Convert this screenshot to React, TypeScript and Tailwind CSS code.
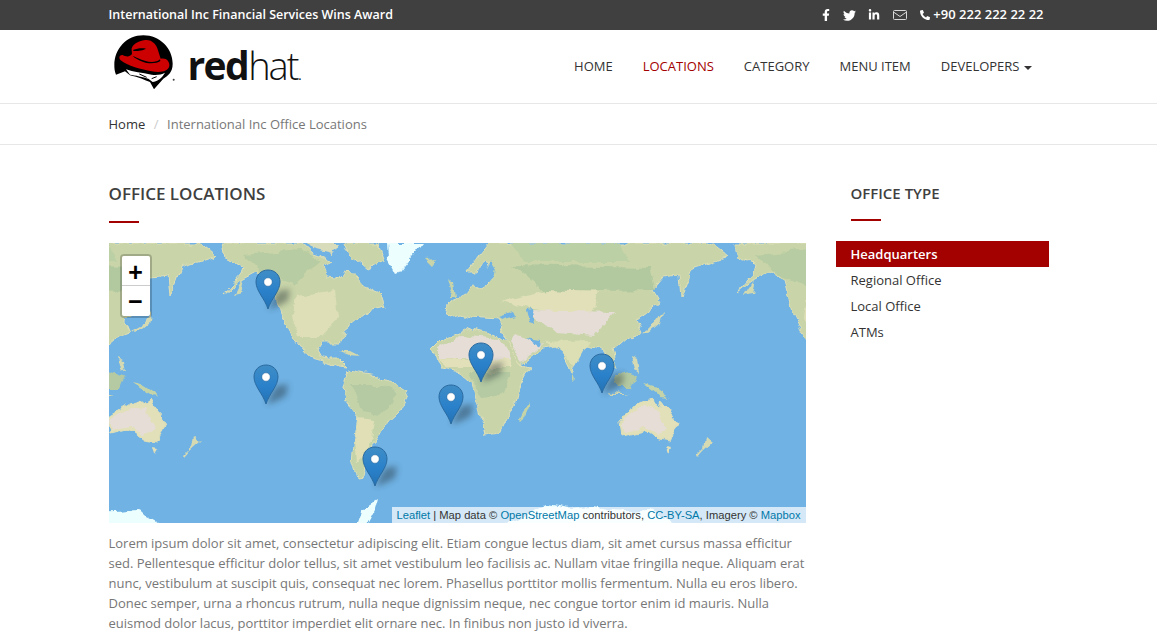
import React from 'react'
import { FaFacebookF, FaTwitter, FaLinkedinIn, FaPhoneAlt } from 'react-icons/fa'

const navItems = ['HOME', 'LOCATIONS', 'CATEGORY', 'MENU ITEM']
const officeTypes = ['Regional Office', 'Local Office', 'ATMs']
const pins = [
    [268, 309],
    [266, 404],
    [481, 382],
    [602, 393],
    [451, 424],
    [375, 486],
]

const LogoHat = () => (
    <svg viewBox="0 0 210 180" className="w-[70px] h-[60px] shrink-0">
        <path d="M13 100C13 50 50 10 100 10C150 10 188 50 188 95C188 120 175 130 160 140L132 172L120 150C105 145 85 135 60 130L45 118L18 128C14 118 13 110 13 100Z" fill="#000" />
        <path d="M48 112C70 120 95 122 125 128C140 130 155 128 165 122C155 140 140 148 128 150L115 140C100 135 75 130 60 128Z" fill="#fff" />
        <path d="M88 126L110 136M125 140L140 134" stroke="#000" strokeWidth="3" />
        <path d="M65 55C62 40 85 26 105 24C127 22 140 38 144 55L152 80C168 76 180 88 178 102C174 120 150 122 125 118C95 112 52 102 32 85C25 78 28 68 38 69C50 76 60 74 66 66Z" fill="#cc0000" />
        <path d="M70 53C80 50 95 47 108 50C100 55 80 58 70 57Z" fill="#000" />
        <path d="M68 72C85 78 98 88 125 90C135 90 145 88 150 82L151 87C140 95 115 96 98 89C85 84 75 79 68 72Z" fill="#000" />
        <circle cx="191" cy="143" r="3" fill="#444" />
    </svg>
)

const MailIcon = () => (
    <svg viewBox="0 0 14 10" className="w-[14px] h-[10px] mr-[13px]" fill="none" stroke="#d8d8d8" strokeWidth="1">
        <rect x="0.5" y="0.5" width="13" height="9" rx="1" />
        <path d="M0.5 2L7 6.5L13.5 2" />
    </svg>
)

const Continents = () => (
    <g id="world">
        {/* north america */}
        <path d="M222 243L225 258L236 262L243 265L241 274L226 292L240 281L257 272L273 280L277 295L282 315L290 332L300 345L310 357L327 362L340 367L348 368L338 358L330 358L322 357L318 350L323 342L340 342L345 338L342 332L357 320L367 312L385 308L380 292L363 285L348 268L337 278L327 277L323 267L333 262L313 255L300 243Z" fill="#c9d5a9" stroke="#dfdfb5" />
        <path d="M345 243L378 243L385 262L368 270L350 255Z" fill="#c9d5a9" stroke="#dfdfb5" />
        <path d="M305 243L340 243L332 255L312 250Z" fill="#d8dcba" />
        <path d="M295 296L335 290L338 318L322 336L300 336L292 316Z" fill="#dedfb7" />
        <path d="M243 255L300 250L320 262L295 285L265 275Z" fill="#b7cca2" />
        <path d="M387 243L422 243L397 275L388 258Z" fill="#ecfffe" />
        <path d="M425 258L438 257L432 265Z" fill="#c9d5a9" />
        <path d="M338 350L350 350L360 355L348 354Z" fill="#d2d9ae" />
        <path d="M232 296L243 279L240 294Z" fill="#d2d9ae" />

        {/* south america */}
        <path d="M343 388L348 370L377 375L390 382L408 393L398 413L383 427L375 442L367 448L363 477L357 478L352 463L355 437L358 417L345 400Z" fill="#c4d4a8" stroke="#dfdfb5" />
        <path d="M352 385L385 385L397 397L380 415L362 412Z" fill="#b5caa3" />
        <path d="M358 418L375 420L372 440L357 462L355 440Z" fill="#e0dfb6" />

        {/* africa */}
        <path d="M433 348L443 338L460 333L463 327L500 337L507 342L520 365L530 367L517 392L515 403L500 433L485 435L480 413L472 383L460 372L440 368Z" fill="#c9d5a9" stroke="#dfdfb5" />
        <path d="M438 348L462 335L500 339L512 362L470 358L438 358Z" fill="#e5ddd6" />
        <path d="M437 358L510 360L512 368L445 368Z" fill="#e2e0b9" />
        <path d="M470 372L512 372L505 395L482 398Z" fill="#b5caa3" />
        <path d="M528 402L530 405L523 421L520 418Z" fill="#c4d4a8" />

        {/* eurasia */}
        <path d="M467 272L480 255L490 243L710 243L727 257L710 263L693 268L682 297L680 276L663 278L653 290L660 302L647 313L637 320L642 332L627 338L613 350L618 368L610 362L600 350L583 345L572 373L562 352L553 345L543 347L520 365L507 342L500 325L498 320L470 318L460 315L450 318L447 315L449 305L457 298L467 293L473 285L483 290L493 278L486 262L472 272Z" fill="#c9d5a9" stroke="#dfdfb5" />
        <path d="M513 265L650 268L655 290L600 291L545 292Z" fill="#b2c9a0" />
        <path d="M510 243L620 243L630 262L525 262Z" fill="#bcd0a6" />
        <path d="M500 302L545 290L600 292L590 318L540 310Z" fill="#e2e0b9" />
        <path d="M528 310L615 312L595 335L555 332Z" fill="#e5ddd6" />
        <path d="M515 335L543 343L522 362L510 342Z" fill="#e5ddd6" />
        <path d="M545 342L590 340L576 365L568 360Z" fill="#dcdeb3" />
        <path d="M498 317L513 312L515 316L500 320Z" fill="#70b2e4" />
        <path d="M527 310L534 309L536 324L530 322Z" fill="#70b2e4" />
        <path d="M528 338L541 340L540 345Z" fill="#70b2e4" />
        <path d="M489 262L494 270L492 280L488 272Z" fill="#70b2e4" />

        {/* islands */}
        <path d="M448 278L453 283L455 298L447 298L451 289Z" fill="#c9d5a9" />
        <path d="M643 333L652 328L660 315L663 312L660 324L648 334Z" fill="#d6dab2" />
        <path d="M630 357L636 360L638 372L633 368Z" fill="#d6dab2" />
        <path d="M615 378L626 372L635 375L630 388L618 388Z" fill="#b5caa3" />
        <path d="M608 392L627 395L612 395Z" fill="#d6dab2" />
        <path d="M643 383L655 386L670 397L660 396Z" fill="#c4d4a8" />
        <path d="M572 372L575 378L572 381Z" fill="#c4d4a8" />

        {/* australia */}
        <path d="M620 417L642 403L652 400L660 407L662 400L677 423L670 442L657 440L643 430L623 435Z" fill="#e2e0b9" stroke="#dfdfb5" />
        <path d="M622 418L642 408L657 410L668 430L656 436L643 427L624 431Z" fill="#e5ddd6" />
        <path d="M666 447L671 448L668 453Z" fill="#e2e0b9" />
        <path d="M705 436L712 442L703 450L696 458L695 456L703 448Z" fill="#d6dab2" />

        {/* antarctica */}
        <path d="M95 530L95 512L137 510L150 516L175 530Z" fill="#ecfffe" />
        <path d="M355 530L362 510L378 500L375 511L365 530Z" fill="#ecfffe" />
        <path d="M497 530L530 513L545 505L570 509L593 507L623 513L640 510L687 530Z" fill="#ecfffe" />
    </g>
)

const WorldMap = () => (
    <svg viewBox="109 243 697 280" className="absolute inset-0 w-full h-full">
        <defs>
            <linearGradient id="pin" x1="0" y1="0" x2="0" y2="1">
                <stop offset="0" stopColor="#3f8dc6" />
                <stop offset="0.55" stopColor="#2a81ca" />
                <stop offset="1" stopColor="#2472b4" />
            </linearGradient>
            <filter id="soft" x="-80%" y="-80%" width="260%" height="260%">
                <feGaussianBlur stdDeviation="3" />
            </filter>
            <filter id="coast" filterUnits="userSpaceOnUse" x="109" y="243" width="697" height="280">
                <feTurbulence type="fractalNoise" baseFrequency="0.07" numOctaves="4" seed="7" result="noise" />
                <feDisplacementMap in="SourceGraphic" in2="noise" scale="9" xChannelSelector="R" yChannelSelector="G" />
                <feGaussianBlur stdDeviation="0.35" />
            </filter>
            <Continents />
        </defs>
        <rect x="109" y="243" width="697" height="280" fill="#70b2e4" />
        <g filter="url(#coast)">
            <use href="#world" />
            <use href="#world" x="-512" />
            <use href="#world" x="512" />
        </g>
        {pins.map(([x, y]) => (
            <g key={`${x}-${y}`} transform={`translate(${x} ${y})`}>
                <path d="M0 0L10 -18L22 -20L20 -8L8 -2Z" fill="#1f2a33" opacity="0.42" filter="url(#soft)" />
                <path d="M0 0C-3 -10 -12 -18 -12 -27C-12 -34 -7 -39 0 -39C7 -39 12 -34 12 -27C12 -18 3 -10 0 0Z" fill="url(#pin)" stroke="#2a6aa0" />
                <circle cx="0" cy="-27" r="4.2" fill="#fff" stroke="#1f5f94" strokeWidth="0.5" />
            </g>
        ))}
    </svg>
)

const App = () => {
    return (
        <div className="bg-white font-['Open_Sans',sans-serif] text-[13px] text-[#333]">
            <div className="bg-[#404040] text-white h-[30px]">
                <div className="w-[970px] mx-auto px-[15px] h-full flex items-center justify-between font-semibold">
                    <span className="text-[12.5px]">International Inc Financial Services Wins Award</span>
                    <div className="flex items-center pr-[5px]">
                        <FaFacebookF className="w-[12px] h-[12px] mr-[11px]" />
                        <FaTwitter className="w-[13px] h-[13px] mr-[12px]" />
                        <FaLinkedinIn className="w-[12px] h-[12px] mr-[13px]" />
                        <MailIcon />
                        <FaPhoneAlt className="w-[10px] h-[10px] mr-[3px]" />
                        <span className="text-[13px]">+90 222 222 22 22</span>
                    </div>
                </div>
            </div>

            <div className="h-[74px] border-b border-[#e7e7e7]">
                <div className="w-[970px] mx-auto px-[15px] h-full flex items-center justify-between">
                    <div className="flex items-start h-full pt-[2px] pl-px">
                        <LogoHat />
                        <div className="ml-[8px] mt-[7px] text-[38px] leading-[52px] text-[#111] whitespace-nowrap">
                            <span className="font-bold text-[39px] tracking-[-1.6px]">red</span><span className="font-light tracking-[-2px]">hat</span><span className="font-light text-[20px]">.</span>
                        </div>
                    </div>
                    <nav className="flex items-center gap-[30px] pr-[17px]">
                        {navItems.map((item) => (
                            <a key={item} className={item === 'LOCATIONS' ? 'text-[#a30000]' : 'text-[#333]'}>{item}</a>
                        ))}
                        <a className="flex items-center text-[#333]">
                            DEVELOPERS
                            <span className="ml-[4px] mt-[2px] border-t-[4px] border-x-[4px] border-t-[#333] border-x-transparent" />
                        </a>
                    </nav>
                </div>
            </div>

            <div className="h-[41px] border-b border-[#e7e7e7]">
                <div className="w-[970px] mx-auto px-[15px] pt-[2px] h-full flex items-center">
                    <a className="text-[#333]">Home</a>
                    <span className="text-[#ccc] px-[8.5px]">/</span>
                    <span className="text-[#777]">International Inc Office Locations</span>
                </div>
            </div>

            <div className="w-[970px] mx-auto flex pt-[37px]">
                <div className="w-[727px] px-[15px]">
                    <h2 className="text-[17px] leading-[24px] font-semibold text-[#3f3f3f]">OFFICE LOCATIONS</h2>
                    <div className="w-[30px] h-[2px] bg-[#a30000] mt-[15px] mb-[20px]" />
                    <div className="relative h-[280px] overflow-hidden">
                        <WorldMap />
                        <div className="absolute left-[11px] top-[11px] w-[32px] border-2 border-black/20 rounded-[4px] bg-clip-padding font-['Liberation_Mono',monospace] font-bold text-black">
                            <div className="h-[30px] pt-[8px] bg-white rounded-t-[2px] border-b border-[#ccc] flex items-center justify-center text-[25px]">+</div>
                            <div className="h-[30px] pt-[5px] bg-white rounded-b-[2px] flex items-center justify-center text-[25px]">−</div>
                        </div>
                        <div className="absolute right-0 bottom-0 h-[16px] bg-white/70 px-[5px] font-['Liberation_Sans',sans-serif] text-[11.2px] leading-[16px] text-[#333] whitespace-nowrap">
                            <a className="text-[#0078a8]">Leaflet</a> | Map data © <a className="text-[#0078a8]">OpenStreetMap</a> contributors, <a className="text-[#0078a8]">CC-BY-SA</a>, Imagery © <a className="text-[#0078a8]">Mapbox</a>
                        </div>
                    </div>
                    <p className="mt-[10px] -mr-px leading-[20px] tracking-[-0.01px] text-[#777]">
                        Lorem ipsum dolor sit amet, consectetur adipiscing elit. Etiam congue lectus diam, sit amet cursus massa efficitur sed. Pellentesque efficitur dolor tellus, sit amet vestibulum leo facilisis ac. Nullam vitae fringilla neque. Aliquam erat nunc, vestibulum at suscipit quis, consequat nec lorem. Phasellus porttitor mollis fermentum. Nulla eu eros libero. Donec semper, urna a rhoncus rutrum, nulla neque dignissim neque, nec congue tortor enim id mauris. Nulla euismod dolor lacus, porttitor imperdiet elit ornare nec. In finibus non justo id viverra.
                    </p>
                </div>

                <div className="w-[243px] px-[15px]">
                    <h3 className="pl-[15px] text-[15px] leading-[22px] font-semibold text-[#3f3f3f]">OFFICE TYPE</h3>
                    <div className="ml-[15px] w-[30px] h-[2px] bg-[#a30000] mt-[15px] mb-[20px]" />
                    <ul>
                        <li className="h-[26px] px-[15px] pt-[2px] flex items-center bg-[#a30000] text-white font-semibold">Headquarters</li>
                        {officeTypes.map((type) => (
                            <li key={type} className="h-[26px] px-[15px] pt-[2px] flex items-center text-[#333]">{type}</li>
                        ))}
                    </ul>
                </div>
            </div>
        </div>
    )
}

export default App
